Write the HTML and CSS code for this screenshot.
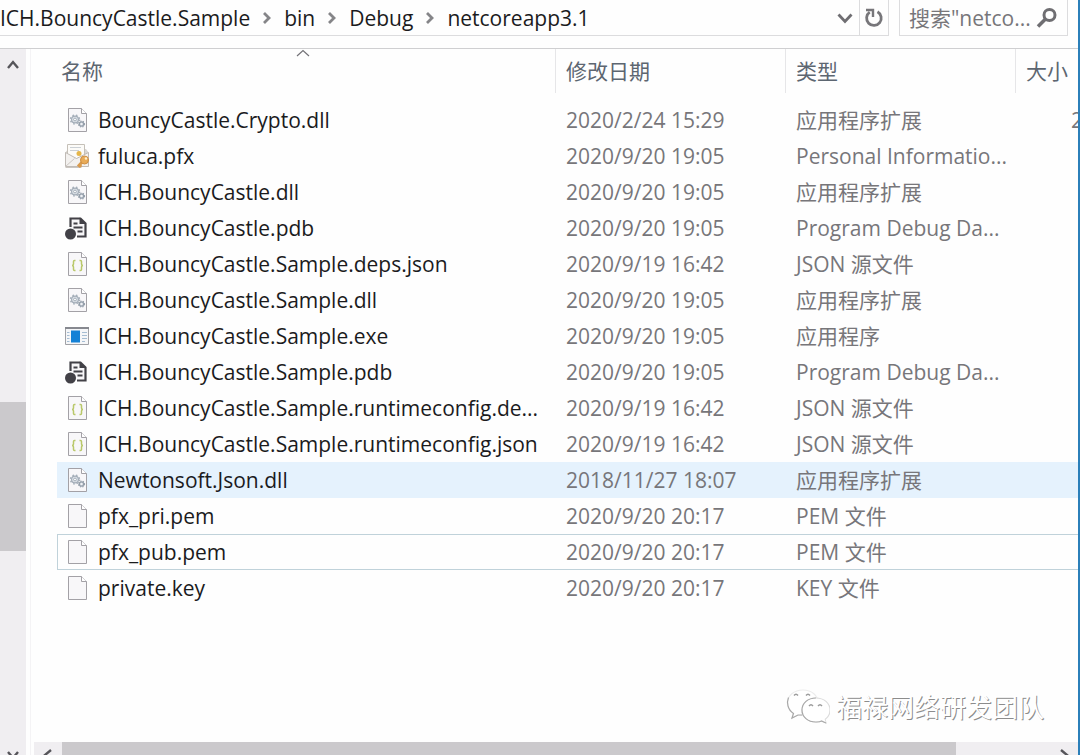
FILE: index.html
```html
<!DOCTYPE html>
<html lang="zh-CN">
<head>
    <meta charset="UTF-8">
    <meta name="viewport" content="width=device-width, initial-scale=1.0">
    <title>netcoreapp3.1</title>
    <link rel="stylesheet" href="styles.css">
</head>
<body>
    <svg class="sprite" aria-hidden="true">
        <symbol id="page" viewBox="0 0 26 26">
            <path d="M4.500 1.500h13l5 5v18h-18z" fill="#f8f7f9" stroke="#a3a1a6"/>
            <path d="M17.500 1.500v5h5" fill="#fff" stroke="#a3a1a6"/>
        </symbol>
        <symbol id="dll" viewBox="0 0 26 26">
            <use href="#page"/>
            <circle cx="11" cy="12.500" r="3.400" fill="#dfe4ea" stroke="#a3adb8" stroke-width="1.200"/>
            <circle cx="11" cy="12.500" r="4.500" fill="none" stroke="#a3adb8" stroke-width="1.400" stroke-dasharray="1.600 2"/>
            <circle cx="11" cy="12.500" r="1.400" fill="#fff" stroke="#a3adb8"/>
            <circle cx="17.500" cy="17" r="2.200" fill="#d5dbe2" stroke="#959fab" stroke-width="1.200"/>
            <circle cx="17.500" cy="17" r="3" fill="none" stroke="#959fab" stroke-width="1.200" stroke-dasharray="1.200 1.300"/>
            <circle cx="17.500" cy="17" r="0.800" fill="#fff"/>
        </symbol>
        <symbol id="json" viewBox="0 0 26 26">
            <use href="#page"/>
            <path d="M11.500 9.500h-1q-1 0-1 1v2.500q0 1.500-1.500 1.500q1.500 0 1.500 1.500v2.500q0 1 1 1h1M15.500 9.500h1q1 0 1 1v2.500q0 1.500 1.500 1.500q-1.500 0-1.500 1.500v2.500q0 1-1 1h-1" fill="none" stroke="#b9c86a" stroke-width="1.500"/>
        </symbol>
        <symbol id="pdb" viewBox="0 0 26 26">
            <path d="M6.500 12V3.500h10l5 5v13H13" fill="#f7f6f8" stroke="#424147" stroke-width="2.200"/>
            <path d="M15.500 2.500v6.500h6.500z" fill="#424147"/>
            <path d="M9.500 8.500h4M9.500 12.500h9M13.500 16.500h5" stroke="#424147" stroke-width="2"/>
            <circle cx="6.500" cy="19" r="5.500" fill="#424147"/>
        </symbol>
        <symbol id="exe" viewBox="0 0 26 26">
            <path d="M1.500 4.500h23v17h-23z" fill="#f5f6f8" stroke="#a0a1a6"/>
            <path d="M1 5h24" stroke="#86888f" stroke-width="2"/>
            <path d="M7 7.500h9v12H7z" fill="#1481d6"/>
            <path d="M3 9.500h2.500M3 12.500h2.500M3 15.500h2.500M3 18.500h2.500M18 9.500h5M18 12.500h5M18 15.500h5M18 18.500h3" stroke="#a5bdd3"/>
        </symbol>
        <symbol id="pfx" viewBox="0 0 26 26">
            <path d="M1 10l3-4h18l3 4v5H1z" fill="#d9d6d2"/>
            <path d="M3.500 1.500h17v14h-17z" fill="#fcfbf8" stroke="#c5c0b8"/>
            <path d="M6 4.500h11M6 7.500h9" stroke="#cbd0d5"/>
            <circle cx="15" cy="10.500" r="2.500" fill="#e5b64a"/>
            <path d="M1.500 9.500l11 6 12-6v14h-23z" fill="#f3f1ef" stroke="#c0bbb6"/>
            <path d="M1.500 23.500l9-8M1.500 24.500h16" fill="none" stroke="#cbc6c1"/>
            <path d="M20 17l-6 6.500M15.500 22l1.500 2" stroke="#d99a4c" stroke-width="3"/>
            <circle cx="20.500" cy="17" r="4" fill="#e8ab58" stroke="#cd8f45"/>
            <circle cx="22" cy="15.500" r="1.200" fill="#fff1cf"/>
        </symbol>
        <symbol id="crumb" viewBox="0 0 12 14">
            <path d="M3 2l5 5-5 5" fill="none" stroke="#858588" stroke-width="2.800"/>
        </symbol>
        <symbol id="arrow" viewBox="0 0 16 16">
            <path d="M3 11l5-6 5 6" fill="none" stroke="#56555a" stroke-width="2.400"/>
        </symbol>
    </svg>

    <div class="explorer">
        <header class="toolbar">
            <nav class="address" aria-label="路径">
                <a href="#">ICH.BouncyCastle.Sample</a>
                <svg class="crumb"><use href="#crumb"/></svg>
                <a href="#">bin</a>
                <svg class="crumb"><use href="#crumb"/></svg>
                <a href="#">Debug</a>
                <svg class="crumb"><use href="#crumb"/></svg>
                <a href="#">netcoreapp3.1</a>
                <button class="history" type="button" aria-label="历史记录">
                    <svg viewBox="0 0 18 18"><path d="M2.500 5.500l6.500 7 6.500-7" fill="none" stroke="#6f6e72" stroke-width="2.800"/></svg>
                </button>
                <button class="refresh" type="button" aria-label="刷新">
                    <svg viewBox="0 0 22 22"><path d="M14.500 4.800a7.300 7.300 0 1 1-7.800.4" fill="none" stroke="#77767a" stroke-width="2.800"/><path d="M3 3h7v7" fill="none" stroke="#77767a" stroke-width="2.400"/></svg>
                </button>
            </nav>
            <form class="search">
                <input type="text" aria-label="搜索" placeholder='搜索"netco...'>
                <button type="button" aria-label="开始搜索">
                    <svg viewBox="0 0 22 22"><circle cx="13.500" cy="8" r="5.500" fill="none" stroke="#6f6e72" stroke-width="3"/><path d="M9.500 12L2 19.500" stroke="#6f6e72" stroke-width="3.600"/></svg>
                </button>
            </form>
        </header>

        <div class="content">
            <div class="scroll-y">
                <button class="up" type="button" aria-label="向上滚动"><svg><use href="#arrow"/></svg></button>
                <div class="before"></div>
                <div class="thumb"></div>
                <div class="after"></div>
                <button class="down" type="button" aria-label="向下滚动"><svg><use href="#arrow"/></svg></button>
            </div>
            <main class="pane">
                <div class="list">
                    <table>
                        <colgroup>
                            <col>
                            <col class="col-date">
                            <col class="col-type">
                            <col class="col-size">
                        </colgroup>
                        <thead>
                            <tr>
                                <th>名称<svg class="sort" viewBox="0 0 14 8"><path d="M1 7l6-5.500L13 7" fill="none" stroke="#737277" stroke-width="1.200"/></svg></th>
                                <th>修改日期</th>
                                <th>类型</th>
                                <th>大小</th>
                            </tr>
                        </thead>
                        <tbody>
                            <tr><td><svg><use href="#dll"/></svg>BouncyCastle.Crypto.dll</td><td>2020/2/24 15:29</td><td>应用程序扩展</td><td class="size">2</td></tr>
                            <tr><td><svg><use href="#pfx"/></svg>fuluca.pfx</td><td>2020/9/20 19:05</td><td>Personal Informatio...</td><td></td></tr>
                            <tr><td><svg><use href="#dll"/></svg>ICH.BouncyCastle.dll</td><td>2020/9/20 19:05</td><td>应用程序扩展</td><td></td></tr>
                            <tr><td><svg><use href="#pdb"/></svg>ICH.BouncyCastle.pdb</td><td>2020/9/20 19:05</td><td>Program Debug Da...</td><td></td></tr>
                            <tr><td><svg><use href="#json"/></svg>ICH.BouncyCastle.Sample.deps.json</td><td>2020/9/19 16:42</td><td>JSON 源文件</td><td></td></tr>
                            <tr><td><svg><use href="#dll"/></svg>ICH.BouncyCastle.Sample.dll</td><td>2020/9/20 19:05</td><td>应用程序扩展</td><td></td></tr>
                            <tr><td><svg><use href="#exe"/></svg>ICH.BouncyCastle.Sample.exe</td><td>2020/9/20 19:05</td><td>应用程序</td><td></td></tr>
                            <tr><td><svg><use href="#pdb"/></svg>ICH.BouncyCastle.Sample.pdb</td><td>2020/9/20 19:05</td><td>Program Debug Da...</td><td></td></tr>
                            <tr><td><svg><use href="#json"/></svg>ICH.BouncyCastle.Sample.runtimeconfig.de...</td><td>2020/9/19 16:42</td><td>JSON 源文件</td><td></td></tr>
                            <tr><td><svg><use href="#json"/></svg>ICH.BouncyCastle.Sample.runtimeconfig.json</td><td>2020/9/19 16:42</td><td>JSON 源文件</td><td></td></tr>
                            <tr class="hovered"><td><svg><use href="#dll"/></svg>Newtonsoft.Json.dll</td><td>2018/11/27 18:07</td><td>应用程序扩展</td><td></td></tr>
                            <tr><td><svg><use href="#page"/></svg>pfx_pri.pem</td><td>2020/9/20 20:17</td><td>PEM 文件</td><td></td></tr>
                            <tr class="focused"><td><svg><use href="#page"/></svg>pfx_pub.pem</td><td>2020/9/20 20:17</td><td>PEM 文件</td><td></td></tr>
                            <tr><td><svg><use href="#page"/></svg>private.key</td><td>2020/9/20 20:17</td><td>KEY 文件</td><td></td></tr>
                        </tbody>
                    </table>
                </div>
                <div class="scroll-x">
                    <button class="left" type="button" aria-label="向左滚动"><svg><use href="#arrow"/></svg></button>
                    <div class="thumb"></div>
                    <div class="after"></div>
                    <button class="right" type="button" aria-label="向右滚动"><svg><use href="#arrow"/></svg></button>
                </div>
            </main>
        </div>

        <div class="watermark">
            <svg viewBox="0 0 44 36">
                <g fill="#fff" stroke-width="1.200">
                    <path d="M17 1C8 1 1.500 6.500 1.500 14c0 4.500 2 8 6 10.500L6 29l6-3c7 1.500 20-1 20-12C32 6.500 26 1 17 1z" stroke="#ececec"/>
                    <path d="M2.500 8.500c-2 5-1 12 5 16L6 29l6-3h4" stroke="#a8a8a8"/>
                    <path d="M30 9c-8 0-14 5-14 12s6 12 14 12c2 0 4 0 5.500-1l4.500 2-1-3.500c3-2 5-5.500 5-9.500 0-7-6-12-14-12z" stroke="#dcdcdc"/>
                    <path d="M30 9c-8 0-14 5-14 12s6 12 14 12c2 0 4 0 5.500-1l4.500 2" stroke="#a8a8a8"/>
                </g>
                <path d="M8 6.500q2-2.500 4 0M20 6.500q2-2.500 4 0M23 17q2-2.500 4 0M32 17q2-2.500 4 0" fill="none" stroke="#9b9b9b" stroke-width="1.400"/>
            </svg>
            <span>福禄网络研发团队</span>
        </div>
    </div>
</body>
</html>
```

FILE: styles.css
```css
* {
    box-sizing: border-box;
}
body {
    margin: 0;
    background: #fefefe;
    color: #1b1b1d;
    font-family: "Open Sans", "Noto Sans CJK SC", sans-serif;
    font-size: 21px;
    line-height: 30px;
}
button {
    display: flex;
    align-items: center;
    justify-content: center;
    flex: none;
    padding: 0;
    border: none;
    background: none;
}
.sprite {
    position: absolute;
    width: 0;
    height: 0;
}
.explorer {
    position: relative;
    display: flex;
    flex-direction: column;
    height: 100vh;
    overflow: hidden;
    border-right: 2px solid #2b7fb9;
}

/* address bar */
.toolbar {
    display: flex;
    gap: 10px;
    height: 36px;
    margin-bottom: 12px;
    padding-right: 10px;
}
.address {
    display: flex;
    flex: 1;
    align-items: center;
    border: solid #dcdcde;
    border-width: 0 1px 1px 0;
    white-space: nowrap;
}
.address a {
    color: inherit;
    text-decoration: none;
}
.crumb {
    width: 12px;
    height: 14px;
    margin: 0 11px;
}
.history {
    width: 28px;
    height: 100%;
    margin-left: auto;
}
.history svg {
    width: 18px;
    height: 18px;
}
.refresh {
    width: 29px;
    height: 100%;
    border-left: 1px solid #dcdcde;
}
.refresh svg {
    width: 22px;
    height: 22px;
}
.search {
    display: flex;
    width: 169px;
    padding: 0 9px;
    border: solid #dcdcde;
    border-width: 0 1px 1px;
}
.search input {
    flex: 1;
    min-width: 0;
    padding: 0;
    border: none;
    background: none;
    font: inherit;
}
.search input::placeholder {
    color: #77767a;
    opacity: 1;
}
.search svg {
    width: 22px;
    height: 22px;
}

.content {
    display: flex;
    flex: 1;
    min-height: 0;
    border-top: 1px solid #cfcfd1;
}

/* scroll bars */
.scroll-y {
    display: flex;
    flex-direction: column;
    width: 26px;
    background: #f0eef1;
}
.scroll-y button {
    height: 32px;
}
.scroll-y svg,
.scroll-x svg {
    flex: none;
    width: 16px;
    height: 16px;
}
.scroll-y .before {
    flex: 321;
}
.scroll-y .thumb {
    flex: 149;
}
.scroll-y .after {
    flex: 196;
}
.scroll-y .down {
    height: 8px;
    align-items: flex-start;
}
.scroll-x {
    display: flex;
    height: 13px;
    margin-left: 3px;
    overflow: hidden;
    background: #f0eef1;
}
.scroll-x button {
    align-items: flex-start;
    width: 28px;
    padding-top: 5px;
}
.scroll-x .thumb {
    flex: 894;
}
.scroll-x .after {
    flex: 94;
}
.thumb {
    background: #cbc9cc;
}
.down svg {
    transform: rotate(180deg);
}
.left svg {
    transform: rotate(-90deg);
}
.right svg {
    transform: rotate(90deg);
}

/* file list */
.pane {
    display: flex;
    flex: 1;
    flex-direction: column;
    min-width: 0;
    margin-left: 4px;
    border-left: 1px solid #f4f3f5;
}
.list {
    flex: 1;
    min-height: 0;
    padding-left: 26px;
    overflow: hidden;
}
table {
    width: 100%;
    border-spacing: 0;
    table-layout: fixed;
}
.col-date,
.col-type {
    width: 230px;
}
.col-size {
    width: 63px;
}
th {
    position: relative;
    height: 44px;
    padding: 0 0 0 10px;
    border-left: 1px solid #e6e6e8;
    color: #5d6671;
    font-weight: normal;
    text-align: left;
    white-space: nowrap;
}
th:first-child {
    padding-left: 4px;
    border-left: none;
}
.sort {
    position: absolute;
    top: 0;
    left: 50%;
    width: 14px;
    height: 8px;
    margin-left: -10px;
}
tbody::before {
    content: "";
    display: block;
    height: 9px;
}
td {
    height: 36px;
    padding: 0 0 0 11px;
    overflow: hidden;
    color: #77767a;
    white-space: nowrap;
}
td:first-child {
    padding-left: 7px;
    color: #1b1b1d;
}
td svg {
    width: 26px;
    height: 26px;
    margin: -4px 8px 0 0;
    vertical-align: middle;
}
.size {
    padding-left: 56px;
}
.hovered td {
    background: #e5f2fd;
}
.focused td {
    border: solid #c0d2da;
    border-width: 1px 0;
}
.focused td:first-child {
    padding-left: 6px;
    border-left-width: 1px;
}

.watermark {
    position: absolute;
    right: 34px;
    bottom: 29px;
    display: flex;
    align-items: center;
    gap: 6px;
    color: #fff;
    font-size: 26px;
    line-height: 38px;
    text-shadow: 1px 1px 0 #8c8c8c;
}
.watermark svg {
    width: 44px;
    height: 36px;
}
```
